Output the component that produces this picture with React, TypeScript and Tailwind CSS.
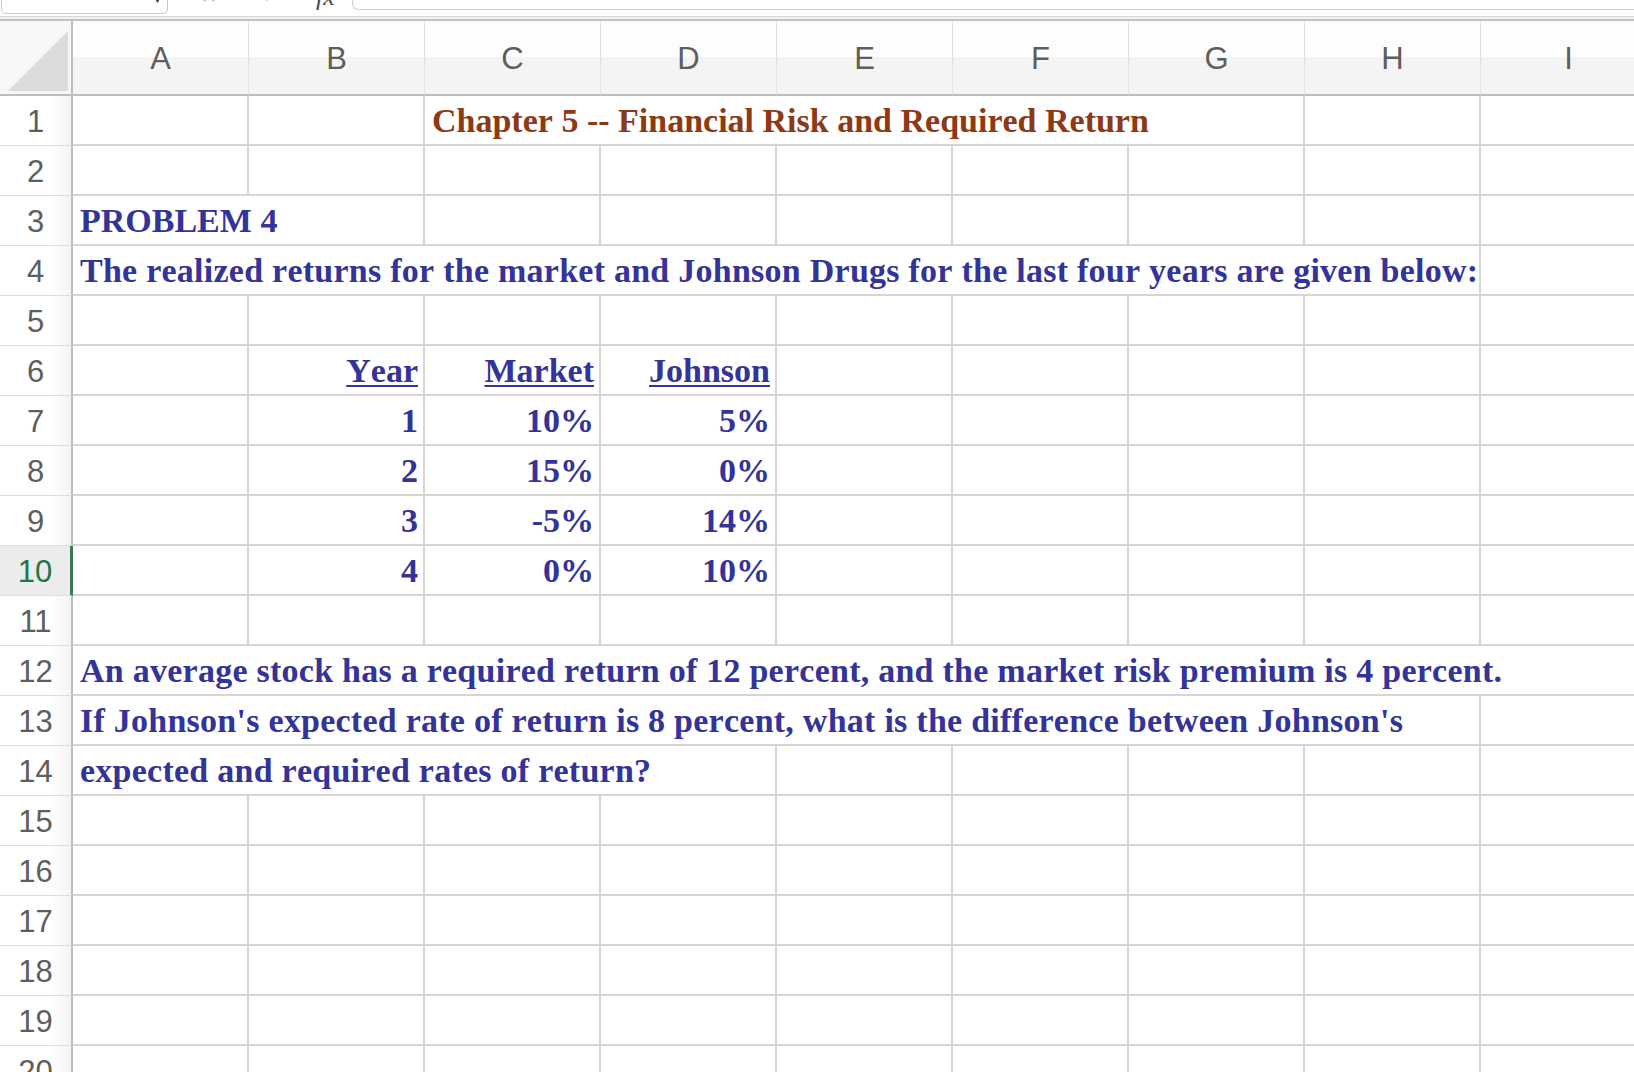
import { X, Check } from "lucide-react";

type Cell = {
  span?: number;
  text?: string;
  align?: "left" | "right";
  title?: boolean;
  u?: boolean;
};

const COLS = ["A", "B", "C", "D", "E", "F", "G", "H", "I"];

const SPAN: Record<number, string> = {
  1: "col-span-1",
  2: "col-span-2",
  4: "col-span-4",
  5: "col-span-5",
  8: "col-span-8",
  9: "col-span-9",
};

const blank = (): Cell[] => COLS.map(() => ({}));

const tableRow = (y: string, m: string, j: string): Cell[] => [
  {},
  { text: y, align: "right" },
  { text: m, align: "right" },
  { text: j, align: "right" },
  {},
  {},
  {},
  {},
  {},
];

const ROWS: Cell[][] = [
  [{}, {}, { span: 5, text: "Chapter 5 -- Financial Risk and Required Return", title: true }, {}, {}],
  blank(),
  [{ span: 2, text: "PROBLEM 4" }, {}, {}, {}, {}, {}, {}, {}],
  [{ span: 8, text: "The realized returns for the market and Johnson Drugs for the last four years are given below:" }, {}],
  blank(),
  [
    {},
    { text: "Year", align: "right", u: true },
    { text: "Market", align: "right", u: true },
    { text: "Johnson", align: "right", u: true },
    {},
    {},
    {},
    {},
    {},
  ],
  tableRow("1", "10%", "5%"),
  tableRow("2", "15%", "0%"),
  tableRow("3", "-5%", "14%"),
  tableRow("4", "0%", "10%"),
  blank(),
  [{ span: 9, text: "An average stock has a required return of 12 percent, and the market risk premium is 4 percent." }],
  [{ span: 8, text: "If Johnson's expected rate of return is 8 percent, what is the difference between Johnson's" }, {}],
  [{ span: 4, text: "expected and required rates of return?" }, {}, {}, {}, {}, {}],
  blank(),
  blank(),
  blank(),
  blank(),
  blank(),
  blank(),
];

const SELECTED_ROW = 10;

function Toolbar() {
  return (
    <div className="flex h-[16px] items-start overflow-hidden bg-white">
      <div className="-mt-[20px] ml-[1px] flex h-[34px] w-[167px] shrink-0 items-end justify-end rounded-[5px] border border-[#c8c8c8] bg-white pr-[4px]">
        <span className="mb-[9px] text-[11px] leading-none text-[#3a3a3a]">▼</span>
      </div>
      <div className="-mt-[13px] ml-[32px] shrink-0 text-[#c6c6c6]">
        <X size={18} strokeWidth={3} />
      </div>
      <div className="-mt-[13px] ml-[42px] shrink-0 text-[#c6c6c6]">
        <Check size={18} strokeWidth={3} />
      </div>
      <div className="-mt-[16px] ml-[38px] shrink-0 font-['Liberation_Serif',serif] text-[26px] leading-[26px] italic text-[#4a4a4a]">
        fx
      </div>
      <div className="-mt-[20px] ml-[17px] h-[30px] flex-1 rounded-bl-[6px] border-b border-l border-[#cfcfcf] bg-white" />
    </div>
  );
}

function ColumnHeader() {
  return (
    <>
      <div className="relative h-[75px] border-r-2 border-b-2 border-r-[#bdbdbd] border-b-[#bdbdbd] bg-[#f7f7f7]">
        <svg className="absolute inset-0" width="71" height="73" viewBox="0 0 71 73">
          <polygon points="8,70 68,10 68,70" fill="#dcdcdc" />
        </svg>
      </div>
      {COLS.map((c) => (
        <div
          key={c}
          className="flex h-[75px] items-center justify-center border-r border-b-2 border-r-[#e1e1e1] border-b-[#bdbdbd] bg-gradient-to-b from-[#fdfdfd] from-50% to-[#f4f4f4] to-50% pt-[3px] font-['Liberation_Sans',Arial,sans-serif] text-[31px] text-[#5e5e5e]"
        >
          {c}
        </div>
      ))}
    </>
  );
}

function RowHeader({ n }: { n: number }) {
  const sel = n === SELECTED_ROW;
  return (
    <div
      className={
        sel
          ? "flex h-[50px] items-center justify-center border-r-[3px] border-b border-r-[#3b7a50] border-b-[#dedede] bg-[#ececec] pt-[3px] font-['Liberation_Sans',Arial,sans-serif] text-[31px] text-[#23744a]"
          : "flex h-[50px] items-center justify-center border-r-2 border-b border-r-[#bdbdbd] border-b-[#dedede] bg-gradient-to-r from-white from-70% to-[#f3f3f3] pt-[3px] font-['Liberation_Sans',Arial,sans-serif] text-[31px] text-[#5e5e5e]"
      }
    >
      {n}
    </div>
  );
}

function DataCell({ cell }: { cell: Cell }) {
  const span = SPAN[cell.span ?? 1];
  const color = cell.title ? "text-[#8e3915]" : "text-[#333399]";
  const align = cell.align === "right" ? "justify-end pr-[5px]" : "justify-start pl-[7px]";
  return (
    <div
      className={`${span} flex h-[50px] items-end overflow-hidden border-r-2 border-b-2 border-[#d6d6d6] bg-white pb-[6px] ${align}`}
    >
      {cell.text && (
        <span
          className={`whitespace-nowrap font-['Liberation_Serif','Times_New_Roman',serif] text-[34px] leading-[34px] font-bold [font-kerning:none] ${color} ${
            cell.u ? "underline decoration-2 underline-offset-[3px]" : ""
          } ${cell.span && cell.span > 2 && !cell.title ? "tracking-[0.25px]" : ""}`}
        >
          {cell.text}
        </span>
      )}
    </div>
  );
}

export default function App() {
  return (
    <div className="h-[1072px] w-[1634px] overflow-hidden bg-white">
      <Toolbar />
      <div className="h-[5px] border-t border-b-2 border-t-[#d6d6d6] border-b-[#c2c2c2] bg-[#f1f1f1]" />
      <div className="grid w-[1657px] grid-cols-[73px_repeat(9,176px)]">
        <ColumnHeader />
        {ROWS.map((row, i) => (
          <div key={i} className="contents">
            <RowHeader n={i + 1} />
            {row.map((cell, j) => (
              <DataCell key={j} cell={cell} />
            ))}
          </div>
        ))}
      </div>
    </div>
  );
}
